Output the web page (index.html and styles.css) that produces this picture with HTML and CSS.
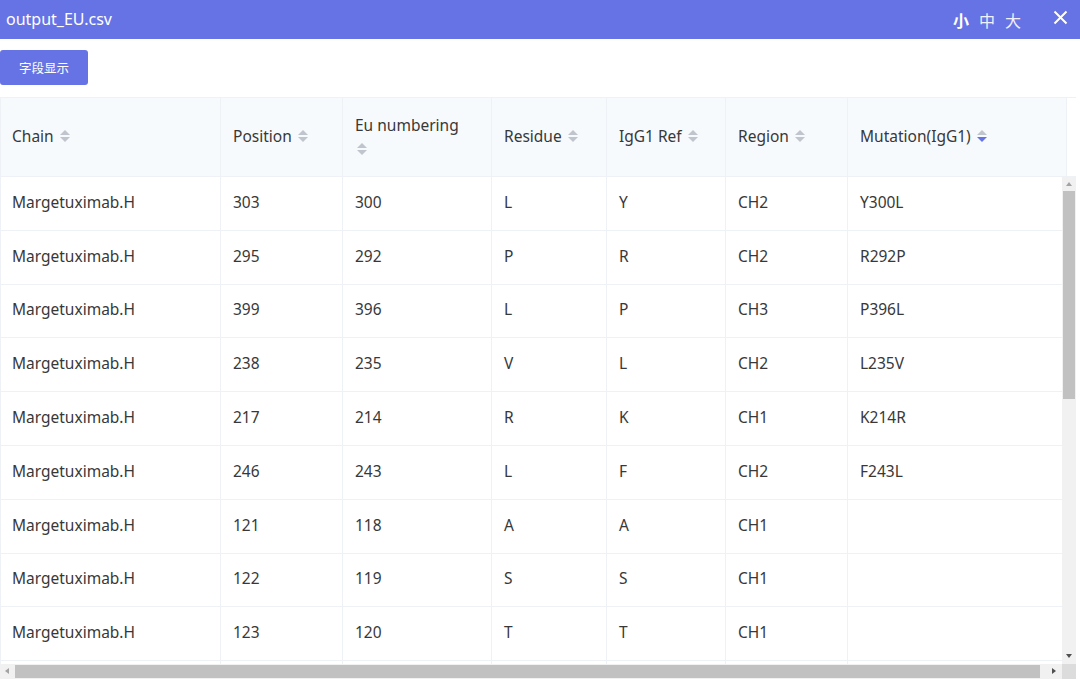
FILE: index.html
```html
<!DOCTYPE html>
<html lang="zh-CN">
<head>
  <meta charset="UTF-8">
  <title>output_EU.csv</title>
  <link rel="stylesheet" href="styles.css">
</head>
<body>
  <div class="titlebar">
    <span class="title">output_EU.csv</span>
    <div class="title-tools">
      <span class="size active">小</span>
      <span class="size">中</span>
      <span class="size">大</span>
      <svg class="close" width="15" height="15" viewBox="0 0 15 15">
        <path d="M1.5 1.5 L13.5 13.5 M13.5 1.5 L1.5 13.5" stroke="#fff" stroke-width="2" fill="none"/>
      </svg>
    </div>
  </div>

  <div class="toolbar">
    <button class="btn">字段显示</button>
  </div>

  <div class="table-wrap">
    <!-- Header -->
    <div class="row head">
      <div class="cell c1">Chain <i class="sort"></i></div>
      <div class="cell c2">Position <i class="sort"></i></div>
      <div class="cell c3 wrap"><span>Eu numbering</span><i class="sort"></i></div>
      <div class="cell c4">Residue <i class="sort"></i></div>
      <div class="cell c5">IgG1 Ref <i class="sort"></i></div>
      <div class="cell c6">Region <i class="sort"></i></div>
      <div class="cell c7h">Mutation(IgG1) <i class="sort desc"></i></div>
      <div class="gutter"></div>
    </div>

    <!-- Body -->
    <div class="body-area">
      <div class="rows">
        <div class="row"><div class="cell c1">Margetuximab.H</div><div class="cell c2">303</div><div class="cell c3">300</div><div class="cell c4">L</div><div class="cell c5">Y</div><div class="cell c6">CH2</div><div class="cell c7">Y300L</div></div>
        <div class="row"><div class="cell c1">Margetuximab.H</div><div class="cell c2">295</div><div class="cell c3">292</div><div class="cell c4">P</div><div class="cell c5">R</div><div class="cell c6">CH2</div><div class="cell c7">R292P</div></div>
        <div class="row"><div class="cell c1">Margetuximab.H</div><div class="cell c2">399</div><div class="cell c3">396</div><div class="cell c4">L</div><div class="cell c5">P</div><div class="cell c6">CH3</div><div class="cell c7">P396L</div></div>
        <div class="row"><div class="cell c1">Margetuximab.H</div><div class="cell c2">238</div><div class="cell c3">235</div><div class="cell c4">V</div><div class="cell c5">L</div><div class="cell c6">CH2</div><div class="cell c7">L235V</div></div>
        <div class="row"><div class="cell c1">Margetuximab.H</div><div class="cell c2">217</div><div class="cell c3">214</div><div class="cell c4">R</div><div class="cell c5">K</div><div class="cell c6">CH1</div><div class="cell c7">K214R</div></div>
        <div class="row"><div class="cell c1">Margetuximab.H</div><div class="cell c2">246</div><div class="cell c3">243</div><div class="cell c4">L</div><div class="cell c5">F</div><div class="cell c6">CH2</div><div class="cell c7">F243L</div></div>
        <div class="row"><div class="cell c1">Margetuximab.H</div><div class="cell c2">121</div><div class="cell c3">118</div><div class="cell c4">A</div><div class="cell c5">A</div><div class="cell c6">CH1</div><div class="cell c7"></div></div>
        <div class="row"><div class="cell c1">Margetuximab.H</div><div class="cell c2">122</div><div class="cell c3">119</div><div class="cell c4">S</div><div class="cell c5">S</div><div class="cell c6">CH1</div><div class="cell c7"></div></div>
        <div class="row"><div class="cell c1">Margetuximab.H</div><div class="cell c2">123</div><div class="cell c3">120</div><div class="cell c4">T</div><div class="cell c5">T</div><div class="cell c6">CH1</div><div class="cell c7"></div></div>
        <div class="row empty"><div class="cell c1"></div><div class="cell c2"></div><div class="cell c3"></div><div class="cell c4"></div><div class="cell c5"></div><div class="cell c6"></div><div class="cell c7"></div></div>
      </div>
      <div class="vscroll">
        <span class="arrow up"></span>
        <span class="thumb"></span>
        <span class="arrow down"></span>
      </div>
    </div>

    <div class="hscroll-row">
      <div class="hscroll">
        <span class="arrow left"></span>
        <span class="thumb"></span>
        <span class="arrow right"></span>
      </div>
      <div class="corner"></div>
    </div>
  </div>
</body>
</html>
```

FILE: styles.css
```css
/* General */
body {
  margin: 0;
  font-family: "Noto Sans", "Noto Sans CJK SC", sans-serif;
  color: #383838;
  background: #fff;
}

/* Title bar */
.titlebar {
  height: 39px;
  background: #6673e5;
  color: #fff;
  display: flex;
  align-items: center;
  justify-content: space-between;
  padding: 0 12px 0 6px;
}

.title {
  font-size: 16px;
  padding-bottom: 2px;
}

.title-tools {
  display: flex;
  align-items: center;
}

.size {
  font-family: "Noto Sans CJK SC", sans-serif;
  font-size: 16px;
  margin-left: 10px;
  opacity: 0.9;
}

.size.active {
  font-weight: bold;
  opacity: 1;
}

.close {
  margin-left: 32px;
  margin-bottom: 4px;
}

/* Toolbar */
.toolbar {
  padding: 11px 0 12px;
}

.btn {
  width: 88px;
  height: 35px;
  border: none;
  border-radius: 3px;
  background: #6673e5;
  color: #fff;
  font-family: "Noto Sans CJK SC", sans-serif;
  font-size: 12.5px;
  cursor: pointer;
}

/* Table */
.table-wrap {
  width: 1076px;
  border-top: 1px solid #eef1f6;
}

.row {
  display: flex;
  height: 53.8px;
  border-bottom: 1px solid #eef1f6;
  box-sizing: border-box;
}

.row.head {
  height: 79px;
  background: #f7fafd;
}

.cell {
  box-sizing: border-box;
  padding: 0 12px 3px;
  display: flex;
  align-items: center;
  font-size: 15.5px;
  border-right: 1px solid #eef1f6;
  white-space: nowrap;
}

.head .cell {
  padding-bottom: 2px;
}

.c1 { width: 221px; border-left: 1px solid #eef1f6; padding-left: 11px; }
.c2 { width: 122px; }
.c3 { width: 149px; }
.c4 { width: 115px; }
.c5 { width: 119px; }
.c6 { width: 122px; }
.c7 { width: 214px; border-right: none; }
.c7h { width: 219px; }

.head .cell.wrap {
  flex-direction: column;
  align-items: flex-start;
  justify-content: center;
  gap: 7px;
  padding-bottom: 6px;
}

.cell.wrap .sort {
  margin-left: 2px;
}

.gutter {
  width: 9px;
  background: #fff;
}

/* Sort icon */
.sort {
  display: inline-block;
  position: relative;
  width: 10px;
  height: 12px;
  margin-left: 6px;
}

.sort::before,
.sort::after {
  content: "";
  position: absolute;
  left: 0;
  border-left: 5px solid transparent;
  border-right: 5px solid transparent;
}

.sort::before {
  top: 0;
  border-bottom: 5px solid #c0c4cc;
}

.sort::after {
  bottom: 0;
  border-top: 5px solid #c0c4cc;
}

.sort.desc::after {
  border-top-color: #6673e5;
}

/* Body + scrollbars */
.body-area {
  display: flex;
  height: 487px;
  overflow: hidden;
}

.rows {
  width: 1062px;
}

.vscroll {
  width: 14px;
  background: #f1f1f1;
  display: flex;
  flex-direction: column;
  align-items: center;
}

.vscroll .thumb {
  width: 12px;
  height: 208px;
  background: #c1c1c1;
}

.vscroll .arrow {
  height: 14px;
  width: 14px;
  position: relative;
}

.vscroll .arrow.down {
  margin-top: auto;
}

.arrow::before {
  content: "";
  position: absolute;
  left: 4px;
  top: 5px;
  border: 3px solid transparent;
}

.arrow.up::before {
  top: 2px;
  border-bottom: 4px solid #a3a3a3;
}

.arrow.down::before {
  top: 4px;
  border-top: 4px solid #505050;
}

.hscroll-row {
  display: flex;
  height: 15px;
}

.hscroll {
  width: 1062px;
  background: #f1f1f1;
  display: flex;
  align-items: center;
}

.hscroll .arrow {
  width: 15px;
  height: 15px;
  position: relative;
}

.hscroll .thumb {
  height: 13px;
  width: 1025px;
  background: #c1c1c1;
}

.hscroll .arrow.right {
  margin-left: auto;
}

.arrow.left::before {
  left: 2px;
  top: 4px;
  border-right: 4px solid #a3a3a3;
}

.arrow.right::before {
  left: 5px;
  top: 4px;
  border-left: 4px solid #505050;
}

.corner {
  width: 14px;
  background: #dcdcdc;
}
```
